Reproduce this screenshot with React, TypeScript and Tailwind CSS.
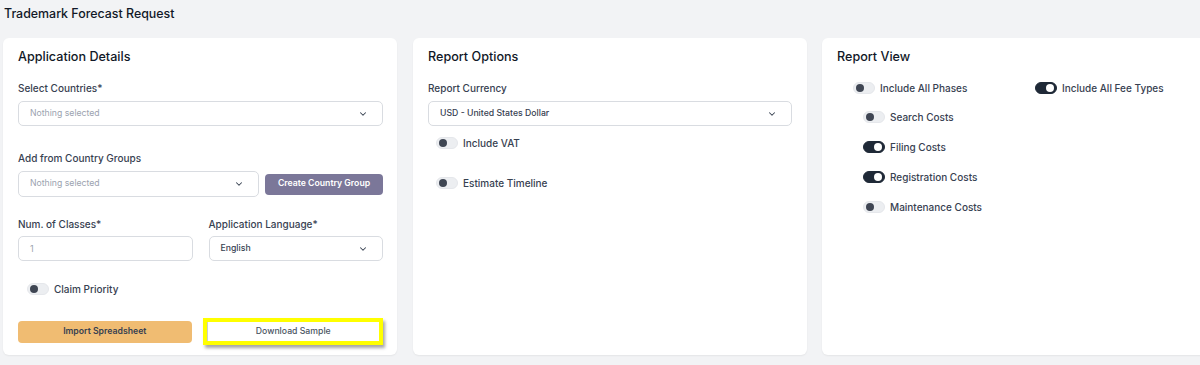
import { ChevronDown } from "lucide-react";

const Toggle = ({ on = false }: { on?: boolean }) => {
  return (
    <span
      className={`flex h-[12px] w-[22px] shrink-0 items-center rounded-full border px-[2px] ${
        on ? "justify-end border-[#1f2937] bg-[#1f2937]" : "justify-start border-[#e5e7eb] bg-[#eceef1]"
      }`}
    >
      <span className={`h-[8px] w-[8px] rounded-full ${on ? "bg-white" : "bg-[#3f4653]"}`} />
    </span>
  );
};

const ToggleRow = ({ label, on, className = "" }: { label: string; on?: boolean; className?: string }) => {
  return (
    <div className={`flex h-[16px] items-center gap-[5px] ${className}`}>
      <Toggle on={on} />
      <span className="text-[10px] font-medium text-[#374151]">{label}</span>
    </div>
  );
};

const SelectBox = ({ value, placeholder, className = "" }: { value?: string; placeholder?: string; className?: string }) => {
  return (
    <div
      className={`flex items-center justify-between rounded-[5px] border border-[#d9dce1] bg-white pl-[11px] pr-[14px] ${className}`}
    >
      <span className={`text-[8.7px] ${value ? "font-medium text-[#374151]" : "text-[#9ca3af]"}`}>
        {value ?? placeholder}
      </span>
      <ChevronDown size={10} strokeWidth={2.5} className="text-[#374151]" />
    </div>
  );
};

const Label = ({ text, className = "" }: { text: string; className?: string }) => (
  <p className={`h-[16px] text-[10px] font-medium leading-[16px] text-[#374151] ${className}`}>{text}</p>
);

const CardTitle = ({ text }: { text: string }) => (
  <h2 className="h-[20px] text-[12.6px] font-medium leading-[20px] text-[#111827]">{text}</h2>
);

const App = () => {
  return (
    <div className="h-[365px] w-[1200px] overflow-hidden bg-[#f2f3f5] font-['Inter',sans-serif]">
      <h1 className="pl-[4px] pt-[6px] text-[12.4px] font-medium leading-[16px] text-[#111827]">
        Trademark Forecast Request
      </h1>
      <div className="ml-[3px] mt-[16px] flex w-[1300px] gap-[15px]">
        {/* Application Details */}
        <div className="mr-[1px] h-[317px] w-[394px] shrink-0 rounded-[6px] bg-white pl-[15px] pr-[14px] pt-[9px] shadow-[0_1px_2px_rgba(0,0,0,0.06)]">
          <CardTitle text="Application Details" />
          <Label text="Select Countries*" className="mt-[13px]" />
          <SelectBox placeholder="Nothing selected" className="mt-[5px] h-[25px]" />
          <Label text="Add from Country Groups" className="mt-[24px]" />
          <div className="mt-[5px] flex items-center gap-[6px]">
            <SelectBox placeholder="Nothing selected" className="h-[26px] w-[241px]" />
            <button className="h-[21px] flex-1 rounded-[4px] bg-[#7b7799] text-[8.7px] font-semibold text-white">
              Create Country Group
            </button>
          </div>
          <div className="mt-[19px] grid grid-cols-2 gap-[16px]">
            <div>
              <Label text="Num. of Classes*" />
              <div className="mt-[4px] flex h-[25px] items-center rounded-[5px] border border-[#d9dce1] pl-[11px] text-[9px] text-[#9ca3af]">
                1
              </div>
            </div>
            <div>
              <Label text="Application Language*" />
              <SelectBox value="English" className="mt-[4px] h-[25px]" />
            </div>
          </div>
          <ToggleRow label="Claim Priority" className="ml-[9px] mt-[20px]" />
          <div className="mt-[21px] flex items-center">
            <button className="h-[22px] w-[174px] rounded-[4px] bg-[#f0bc72] text-[8.7px] font-semibold text-[#374151]">
              Import Spreadsheet
            </button>
            <div className="ml-[11px] flex h-[27px] w-[181px] bg-[#ffff00] p-[4px] shadow-[2px_3px_3px_rgba(0,0,0,0.35)]">
              <button className="flex h-full flex-1 items-center justify-center border-l border-[#c9ccd1] bg-white text-[8.7px] font-medium text-[#4b5563]">
                Download Sample
              </button>
            </div>
          </div>
        </div>

        {/* Report Options */}
        <div className="h-[317px] w-[394px] shrink-0 rounded-[6px] bg-white pl-[15px] pr-[15px] pt-[9px] shadow-[0_1px_2px_rgba(0,0,0,0.06)]">
          <CardTitle text="Report Options" />
          <Label text="Report Currency" className="mt-[13px]" />
          <SelectBox value="USD - United States Dollar" className="mt-[5px] h-[25px]" />
          <ToggleRow label="Include VAT" className="ml-[8px] mt-[9px]" />
          <ToggleRow label="Estimate Timeline" className="ml-[8px] mt-[24px]" />
        </div>

        {/* Report View */}
        <div className="h-[317px] w-[394px] shrink-0 rounded-[6px] bg-white pl-[15px] pr-[15px] pt-[9px] shadow-[0_1px_2px_rgba(0,0,0,0.06)]">
          <CardTitle text="Report View" />
          <div className="ml-[16px] mt-[13px] flex">
            <div className="w-[182px]">
              <ToggleRow label="Include All Phases" />
              <div className="ml-[10px] mt-[13px] flex flex-col gap-[14px]">
                <ToggleRow label="Search Costs" />
                <ToggleRow label="Filing Costs" on />
                <ToggleRow label="Registration Costs" on />
                <ToggleRow label="Maintenance Costs" />
              </div>
            </div>
            <ToggleRow label="Include All Fee Types" on />
          </div>
        </div>
      </div>
    </div>
  );
};

export default App;
